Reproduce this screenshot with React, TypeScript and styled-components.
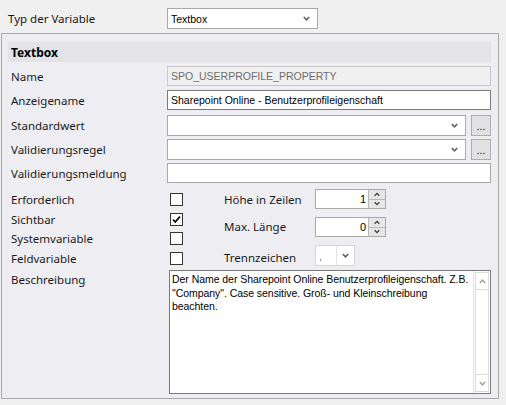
import React from "react";
import styled, { createGlobalStyle } from "styled-components";

const GlobalStyle = createGlobalStyle`
  html, body { margin: 0; padding: 0; }
  body {
    background: #f0f0f0;
    font-family: "Segoe UI", "Noto Sans", "Open Sans", sans-serif;
    font-size: 11.5px;
    color: #1a1a1a;
    width: 506px;
    height: 405px;
    overflow: hidden;
  }
`;

const Page = styled.div`
  display: flex;
  flex-direction: column;
  width: 506px;
`;

const TopBar = styled.div`
  display: flex;
  align-items: center;
  height: 33px;
  box-sizing: border-box;
  padding: 8px 0 4px 8px;
`;

const TopLabel = styled.div`
  width: 159px;
  font-size: 11.5px;
  color: #1e1414;
`;

const Panel = styled.div`
  box-sizing: border-box;
  width: 498px;
  margin-left: 1px;
  border: 1px solid #a9a9a9;
  background: #eeeef2;
  padding: 8px 7px 4px 6px;
  display: flex;
  flex-direction: column;
`;

const PanelHeader = styled.div`
  height: 20px;
  background: #e3e3e8;
  display: flex;
  align-items: center;
  padding-left: 3px;
  font-weight: 700;
  font-size: 12px;
  color: #000;
`;

const FieldRow = styled.div<{ $top: number }>`
  display: flex;
  align-items: center;
  margin-top: ${(p) => p.$top}px;
`;

const Label = styled.div<{ $width?: number }>`
  width: ${(p) => p.$width ?? 159}px;
  flex-shrink: 0;
  padding-left: 3px;
  box-sizing: border-box;
  color: #1a1a1a;
  white-space: nowrap;
`;

const TextInput = styled.div<{ $disabled?: boolean; $dark?: boolean }>`
  flex: 1;
  height: 20px;
  box-sizing: border-box;
  border: 1px solid ${(p) => (p.$dark ? "#7a7a7a" : p.$disabled ? "#c8c8c8" : "#a9a9a9")};
  background: ${(p) => (p.$disabled ? "#f0f0f0" : "#fff")};
  color: ${(p) => (p.$disabled ? "#6d6d6d" : "#000")};
  font-family: "Liberation Sans", Arial, sans-serif;
  font-size: 10.5px;
  display: flex;
  align-items: center;
  padding-left: 3px;
  white-space: nowrap;
  overflow: hidden;
`;

const Combo = styled.div<{ $width?: number }>`
  ${(p) => (p.$width ? `width: ${p.$width}px;` : "flex: 1;")}
  height: 21px;
  box-sizing: border-box;
  border: 1px solid #a9a9a9;
  background: #fff;
  display: flex;
  align-items: center;
  justify-content: space-between;
  padding: 0 7px 0 3px;
  font-family: "Liberation Sans", Arial, sans-serif;
  font-size: 10.5px;
  color: #000;
`;

const DotsButton = styled.div`
  width: 20px;
  height: 21px;
  margin-left: 5px;
  box-sizing: border-box;
  border: 1px solid #adadad;
  background: #e1e1e1;
  display: flex;
  align-items: flex-end;
  justify-content: center;
  padding-bottom: 4px;
  font-family: "Liberation Sans", Arial, sans-serif;
  font-size: 10px;
  line-height: 8px;
  color: #000;
`;

const OptionsSection = styled.div`
  display: flex;
  margin-top: 6px;
`;

const CheckColumn = styled.div`
  display: flex;
  flex-direction: column;
  padding-top: 4px;
  gap: 6.67px;
  width: 213px;
`;

const CheckRow = styled.div`
  display: flex;
  align-items: center;
  height: 13px;
`;

const CheckBox = styled.div`
  width: 13px;
  height: 13px;
  box-sizing: border-box;
  border: 1px solid #333;
  background: #fff;
  display: flex;
  align-items: center;
  justify-content: center;
`;

const NumberColumn = styled.div`
  display: flex;
  flex-direction: column;
`;

const NumberRow = styled.div<{ $top: number; $labelShift?: number }>`
  display: flex;
  align-items: center;
  margin-top: ${(p) => p.$top}px;
  & > ${Label} {
    position: relative;
    top: ${(p) => p.$labelShift ?? 0}px;
  }
`;

const Spinner = styled.div`
  width: 71px;
  height: 20px;
  box-sizing: border-box;
  border: 1px solid #a9a9a9;
  background: #fff;
  display: flex;
`;

const SpinValue = styled.div`
  flex: 1;
  display: flex;
  align-items: center;
  justify-content: flex-end;
  padding-right: 2px;
  font-family: "Liberation Sans", Arial, sans-serif;
  font-size: 11px;
  color: #000;
`;

const SpinButtons = styled.div`
  width: 16px;
  display: flex;
  flex-direction: column;
  border-left: 1px solid #b8b8b8;
`;

const SpinButton = styled.div<{ $first?: boolean }>`
  flex: 1;
  background: #e6e6e6;
  border-top: ${(p) => (p.$first ? "none" : "1px solid #b8b8b8")};
  display: flex;
  align-items: center;
  justify-content: center;
`;

const SmallCombo = styled.div`
  width: 40px;
  height: 21px;
  box-sizing: border-box;
  border: 1px solid #d6d6d6;
  background: #fff;
  display: flex;
`;

const SmallComboField = styled.div`
  width: 21px;
  display: flex;
  align-items: flex-end;
  padding: 0 0 3px 3px;
  box-sizing: border-box;
  font-family: "Liberation Sans", Arial, sans-serif;
  font-size: 10.5px;
  color: #5a78a0;
  border-right: 1px solid #e4e4e4;
`;

const SmallComboButton = styled.div`
  flex: 1;
  display: flex;
  align-items: center;
  justify-content: center;
`;

const DescriptionRow = styled.div`
  display: flex;
  align-items: flex-start;
  margin-top: 4px;
  & > ${Label} {
    padding-top: 2px;
  }
`;

const TextArea = styled.div`
  flex: 1;
  height: 124px;
  box-sizing: border-box;
  border: 1px solid #7a7a7a;
  background: #fff;
  display: flex;
  margin-left: 1px;
`;

const TextAreaContent = styled.div`
  flex: 1;
  padding: 2px 0 0 2px;
  font-family: "Liberation Sans", Arial, sans-serif;
  font-size: 10.5px;
  letter-spacing: -0.05px;
  line-height: 13.5px;
  color: #000;
`;

const ScrollBar = styled.div`
  width: 17px;
  display: flex;
  flex-direction: column;
  border-left: 1px solid #e3e3e3;
  padding: 1px;
  box-sizing: border-box;
`;

const ScrollTrack = styled.div`
  flex: 1;
  border: 1px solid #dadada;
  display: flex;
  flex-direction: column;
  justify-content: space-between;
`;

const ScrollButton = styled.div<{ $bottom?: boolean }>`
  height: 16px;
  display: flex;
  align-items: center;
  justify-content: center;
  ${(p) => (p.$bottom ? "border-top: 1px solid #dadada;" : "border-bottom: 1px solid #dadada;")}
`;

const Chevron = ({ up, color = "#606060", w = 7 }: { up?: boolean; color?: string; w?: number }) => (
  <svg width={w} height={5} viewBox="0 0 7 5" style={{ display: "block" }}>
    <polyline
      points={up ? "0.8,4 3.5,1.2 6.2,4" : "0.8,1 3.5,3.8 6.2,1"}
      fill="none"
      stroke={color}
      strokeWidth={1.6}
    />
  </svg>
);

const Check = () => (
  <svg width="9" height="9" viewBox="0 0 9 9" style={{ display: "block" }}>
    <polyline points="1,4.5 3.3,7 8,1.5" fill="none" stroke="#000" strokeWidth={1.8} />
  </svg>
);

const checks = [
  { label: "Erforderlich", checked: false },
  { label: "Sichtbar", checked: true },
  { label: "Systemvariable", checked: false },
  { label: "Feldvariable", checked: false },
];

export default function App() {
  return (
    <>
      <GlobalStyle />
      <Page>
        <TopBar>
          <TopLabel>Typ der Variable</TopLabel>
          <Combo $width={151}>
            <span>Textbox</span>
            <Chevron />
          </Combo>
        </TopBar>
        <Panel>
          <PanelHeader>Textbox</PanelHeader>
          <FieldRow $top={4}>
            <Label>Name</Label>
            <TextInput $disabled>SPO_USERPROFILE_PROPERTY</TextInput>
          </FieldRow>
          <FieldRow $top={4}>
            <Label>Anzeigename</Label>
            <TextInput $dark>Sharepoint Online - Benutzerprofileigenschaft</TextInput>
          </FieldRow>
          <FieldRow $top={5}>
            <Label>Standardwert</Label>
            <Combo>
              <span />
              <Chevron />
            </Combo>
            <DotsButton>...</DotsButton>
          </FieldRow>
          <FieldRow $top={3}>
            <Label>Validierungsregel</Label>
            <Combo>
              <span />
              <Chevron />
            </Combo>
            <DotsButton>...</DotsButton>
          </FieldRow>
          <FieldRow $top={3}>
            <Label>Validierungsmeldung</Label>
            <TextInput />
          </FieldRow>
          <OptionsSection>
            <CheckColumn>
              {checks.map((c) => (
                <CheckRow key={c.label}>
                  <Label $width={162}>{c.label}</Label>
                  <CheckBox>{c.checked && <Check />}</CheckBox>
                </CheckRow>
              ))}
            </CheckColumn>
            <NumberColumn>
              <NumberRow $top={0}>
                <Label $width={94}>Höhe in Zeilen</Label>
                <Spinner>
                  <SpinValue>1</SpinValue>
                  <SpinButtons>
                    <SpinButton $first>
                      <Chevron up w={6} color="#404040" />
                    </SpinButton>
                    <SpinButton>
                      <Chevron w={6} color="#404040" />
                    </SpinButton>
                  </SpinButtons>
                </Spinner>
              </NumberRow>
              <NumberRow $top={8} $labelShift={-1}>
                <Label $width={94}>Max. Länge</Label>
                <Spinner>
                  <SpinValue>0</SpinValue>
                  <SpinButtons>
                    <SpinButton $first>
                      <Chevron up w={6} color="#404040" />
                    </SpinButton>
                    <SpinButton>
                      <Chevron w={6} color="#404040" />
                    </SpinButton>
                  </SpinButtons>
                </Spinner>
              </NumberRow>
              <NumberRow $top={8} $labelShift={2}>
                <Label $width={94}>Trennzeichen</Label>
                <SmallCombo>
                  <SmallComboField>,</SmallComboField>
                  <SmallComboButton>
                    <Chevron />
                  </SmallComboButton>
                </SmallCombo>
              </NumberRow>
            </NumberColumn>
          </OptionsSection>
          <DescriptionRow>
            <Label $width={160}>Beschreibung</Label>
            <TextArea>
              <TextAreaContent>
                Der Name der Sharepoint Online Benutzerprofileigenschaft. Z.B. "Company". Case sensitive. Groß- und Kleinschreibung beachten.
              </TextAreaContent>
              <ScrollBar>
                <ScrollTrack>
                  <ScrollButton>
                    <Chevron up w={7} color="#a6a6a6" />
                  </ScrollButton>
                  <ScrollButton $bottom>
                    <Chevron w={7} color="#a6a6a6" />
                  </ScrollButton>
                </ScrollTrack>
              </ScrollBar>
            </TextArea>
          </DescriptionRow>
        </Panel>
      </Page>
    </>
  );
}
